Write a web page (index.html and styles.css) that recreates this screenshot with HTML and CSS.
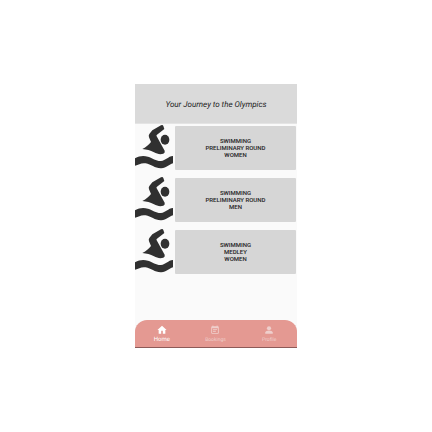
FILE: index.html
```
<!DOCTYPE html>
<html lang="en">
<head>
<meta charset="utf-8">
<meta name="viewport" content="width=device-width, initial-scale=1">
<title>Your Journey to the Olympics</title>
<link rel="stylesheet" href="styles.css">
</head>
<body>
<svg class="symbols" aria-hidden="true">
  <symbol id="swimmer" viewBox="0 0 114 138">
    <path d="M78 4Q83 1 85 6L88 15L66 32Q63 34 65 37L89 80Q91 86 85 89C76 92 66 90 57 85C46 78 35 77 22 75C34 69 41 62 48 54L42 40Q40 34 43 30L52 19Z"/>
    <ellipse cx="90" cy="47" rx="13" ry="15"/>
    <path d="M0 103C13 95 26 94 39 98C53 102 64 112 78 111C92 110 99 97 114 96V118C102 121 95 132 79 133C60 134 49 121 32 118C18 116 12 122 0 125Z"/>
  </symbol>
</svg>
<div class="app">
  <header class="header"><h1 class="title">Your Journey to the Olympics</h1></header>
  <main class="events">
    <div class="event">
      <svg class="swimmer" aria-hidden="true"><use href="#swimmer"/></svg>
      <button class="card" type="button">SWIMMING<br>PRELIMINARY ROUND<br>WOMEN</button>
    </div>
    <div class="event">
      <svg class="swimmer" aria-hidden="true"><use href="#swimmer"/></svg>
      <button class="card" type="button">SWIMMING<br>PRELIMINARY ROUND<br>MEN</button>
    </div>
    <div class="event">
      <svg class="swimmer" aria-hidden="true"><use href="#swimmer"/></svg>
      <button class="card" type="button">SWIMMING<br>MEDLEY<br>WOMEN</button>
    </div>
  </main>
  <nav class="tabs">
    <a class="tab active" href="#home">
      <svg class="icon" viewBox="0 0 24 24" aria-hidden="true"><path d="M12 2L1 12h3v9h6v-7h4v7h6v-9h3z"/></svg>
      <span>Home</span>
    </a>
    <a class="tab" href="#bookings">
      <svg class="icon" viewBox="0 0 24 24" aria-hidden="true"><path d="M17 10H7v2h10zM19 3h-1V1h-2v2H8V1H6v2H5c-1 0-2 1-2 2v14c0 1 1 2 2 2h14c1 0 2-1 2-2V5c0-1-1-2-2-2zm0 16H5V8h14zM14 14H7v2h7z"/></svg>
      <span>Bookings</span>
    </a>
    <a class="tab" href="#profile">
      <svg class="icon" viewBox="0 0 24 24" aria-hidden="true"><circle cx="12" cy="8" r="5"/><path d="M3 21v-3c0-3 5-4 9-4s9 1 9 4v3z"/></svg>
      <span>Profile</span>
    </a>
  </nav>
</div>
</body>
</html>
```
FILE: styles.css
```
* {
  box-sizing: border-box;
}

body {
  margin: 0;
  min-height: 100vh;
  display: grid;
  place-items: center;
  background: #fff;
  font-family: Roboto, sans-serif;
  text-rendering: geometricPrecision;
}

.symbols {
  display: none;
}

.app {
  width: 37.5vw;
  min-width: 162px;
  min-height: 264px;
  display: flex;
  flex-direction: column;
  background: #fafafa;
}

.header {
  padding: 16px 4px 13px;
  background: #dadada;
  border-bottom: 1px solid #e4e4e4;
}

.title {
  margin: 0;
  font-size: 8px;
  line-height: 10px;
  font-weight: 400;
  font-style: italic;
  text-align: center;
  color: #222;
}

.events {
  flex: 1;
  display: flex;
  flex-direction: column;
  gap: 6px;
}

.event {
  display: grid;
  grid-template-columns: 38px 1fr;
  column-gap: 2px;
  padding: 0 1px 0 0;
}

.swimmer {
  width: 38px;
  height: 46px;
  fill: #303030;
}

.card {
  margin: 2px 0 0;
  padding: 0 0 1px;
  border: 0;
  border-radius: 1px;
  background: #d6d6d6;
  color: #222;
  font-family: inherit;
  font-size: 6px;
  line-height: 7px;
  font-weight: 500;
  text-align: center;
}

.tabs {
  display: grid;
  grid-template-columns: repeat(3, 1fr);
  padding: 5px 1px 4px 0;
  background: #e49992;
  border-radius: 12px 12px 0 0;
  box-shadow: inset 0 -1px #8d5a58;
}

.tab {
  display: flex;
  flex-direction: column;
  align-items: center;
  gap: 1px;
  color: #efcfcc;
  font-size: 5px;
  line-height: 8px;
  text-decoration: none;
}

.tab.active {
  color: #fff;
  font-size: 6px;
}

.icon {
  width: 10px;
  height: 10px;
  fill: currentColor;
}
```
